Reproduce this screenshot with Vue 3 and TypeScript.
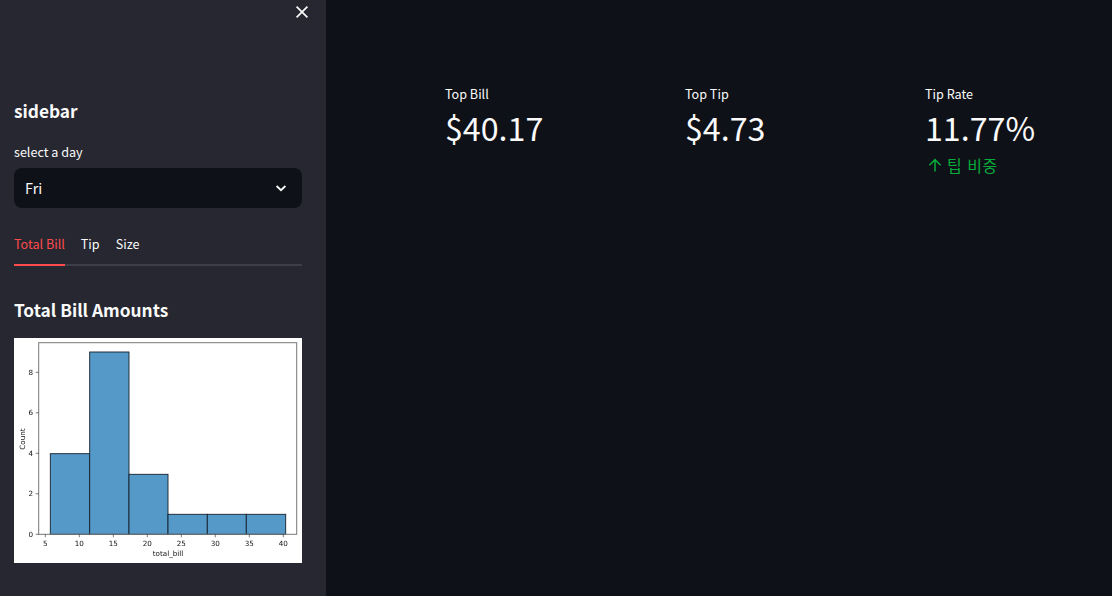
<template>
  <div class="page">
    <aside class="sidebar">
      <div class="sidebar-top">
        <button class="close-btn" aria-label="Close sidebar">
          <svg width="16" height="16" viewBox="0 0 16 16" fill="none">
            <path d="M2.6 2.6 13.4 13.4M13.4 2.6 2.6 13.4" stroke="#fafafa" stroke-width="1.7" />
          </svg>
        </button>
      </div>

      <h2 class="sidebar-title">sidebar</h2>

      <label class="field-label">select a day</label>
      <div class="select-box">
        <span class="select-value">Fri</span>
        <svg width="16" height="16" viewBox="0 0 16 16" fill="none">
          <path d="M3.6 6 8 10.2 12.4 6" stroke="#fafafa" stroke-width="1.8" />
        </svg>
      </div>

      <div class="tabs">
        <div
          v-for="tab in tabs"
          :key="tab"
          class="tab"
          :class="{ active: tab === activeTab }"
        >
          {{ tab }}
        </div>
      </div>

      <h3 class="chart-title">Total Bill Amounts</h3>

      <div class="chart">
        <svg width="288" height="225" viewBox="0 0 288 225">
          <rect
            v-for="bar in bars"
            :key="bar.x"
            :x="bar.x"
            :y="bar.y"
            :width="bar.w"
            :height="baseY - bar.y"
            fill="#5499c7"
            stroke="#14202c"
            stroke-width="0.9"
          />
          <rect x="24.7" y="4.7" width="258" height="191.6" fill="none" stroke="#777" stroke-width="1" />
          <g v-for="t in xTicks" :key="t.label">
            <line :x1="t.x" :x2="t.x" :y1="baseY" :y2="baseY + 3" stroke="#222" stroke-width="0.6" />
            <text :x="t.x" y="207.5" class="tick" text-anchor="middle">{{ t.label }}</text>
          </g>
          <g v-for="t in yTicks" :key="t.label">
            <line x1="21.7" x2="24.7" :y1="t.y" :y2="t.y" stroke="#222" stroke-width="0.6" />
            <text x="19" :y="t.y + 2.6" class="tick" text-anchor="end">{{ t.label }}</text>
          </g>
          <text x="154" y="217.5" class="tick" text-anchor="middle">total_bill</text>
          <text class="tick" text-anchor="middle" transform="translate(11 101) rotate(-90)">Count</text>
        </svg>
      </div>
    </aside>

    <main class="main">
      <div class="metrics">
        <div v-for="m in metrics" :key="m.label" class="metric">
          <div class="metric-label">{{ m.label }}</div>
          <div class="metric-value">{{ m.value }}</div>
          <div v-if="m.delta" class="metric-delta">
            <svg width="16" height="16" viewBox="0 0 16 16" fill="none">
              <path d="M8 14.4V2.6M2.4 8.2 8 2.6l5.6 5.6" stroke="#09ab3b" stroke-width="1.5" />
            </svg>
            <span>{{ m.delta }}</span>
          </div>
        </div>
      </div>
    </main>
  </div>
</template>

<script setup lang="ts">
const tabs = ['Total Bill', 'Tip', 'Size']
const activeTab = 'Total Bill'

const baseY = 196.3

const bars = [
  { x: 36.3, y: 115.7, w: 39.4 },
  { x: 75.7, y: 14, w: 39.3 },
  { x: 115, y: 136.3, w: 39 },
  { x: 154, y: 176.3, w: 39.3 },
  { x: 193.3, y: 176.3, w: 39 },
  { x: 232.3, y: 176.3, w: 39.4 },
]

const xTicks = [5, 10, 15, 20, 25, 30, 35, 40].map((v, i) => ({
  label: String(v),
  x: 31.3 + i * 34,
}))

const yTicks = [0, 2, 4, 6, 8].map((v, i) => ({
  label: String(v),
  y: baseY - i * 40.5,
}))

const metrics = [
  { label: 'Top Bill', value: '$40.17', delta: '' },
  { label: 'Top Tip', value: '$4.73', delta: '' },
  { label: 'Tip Rate', value: '11.77%', delta: '팁 비중' },
]
</script>

<style>
html,
body {
  margin: 0;
  background: #0e1117;
}
</style>

<style scoped>
.page {
  display: flex;
  height: 596px;
  overflow: hidden;
  font-family: "Noto Sans CJK KR", "Noto Sans", sans-serif;
  color: #fafafa;
  background: #0e1117;
}

.sidebar {
  width: 326px;
  flex-shrink: 0;
  box-sizing: border-box;
  padding: 0 24px 0 14px;
  background: #262730;
}

.sidebar-top {
  display: flex;
  justify-content: flex-end;
  height: 97px;
  margin-right: -8px;
  padding-top: 4px;
  box-sizing: border-box;
}

.close-btn {
  width: 16px;
  height: 16px;
  padding: 0;
  border: none;
  background: none;
}

.sidebar-title {
  margin: 0;
  font-size: 17.3px;
  line-height: 28px;
  font-weight: 600;
}

.field-label {
  display: block;
  margin-top: 15px;
  font-size: 12.6px;
  line-height: 24px;
}

.select-box {
  display: flex;
  align-items: center;
  justify-content: space-between;
  height: 40px;
  margin-top: 4px;
  padding: 0 13px 0 11px;
  border-radius: 8px;
  background: #0e1117;
  font-size: 14.4px;
}

.select-value {
  height: 40px;
  line-height: 39px;
}

.tabs {
  display: flex;
  gap: 16px;
  height: 58px;
  box-sizing: border-box;
  padding-top: 18px;
  border-bottom: 2px solid #3d3e47;
  font-size: 12.6px;
}

.tab {
  height: 40px;
  line-height: 36px;
  box-sizing: border-box;
  white-space: nowrap;
}

.tab.active {
  color: #ff4b4b;
  border-bottom: 2px solid #ff4b4b;
}

.chart-title {
  margin: 29px 0 0;
  font-size: 17.3px;
  line-height: 30px;
  font-weight: 600;
}

.chart {
  width: 288px;
  height: 225px;
  margin-top: 13px;
  background: #fff;
}

.chart svg {
  display: block;
  filter: blur(0.3px);
}

.tick {
  font-family: "DejaVu Sans", sans-serif;
  font-size: 7.2px;
  fill: #111;
}

.main {
  flex: 1;
  padding: 84px 0 0 119px;
}

.metrics {
  display: grid;
  grid-template-columns: repeat(3, 240px);
}

.metric-label {
  font-size: 12.6px;
  line-height: 20px;
}

.metric-value {
  margin-top: 0;
  font-size: 32.2px;
  line-height: 46px;
}

.metric-delta {
  display: flex;
  align-items: center;
  gap: 4px;
  margin-top: 4px;
  margin-left: 2px;
  font-size: 16px;
  line-height: 22px;
  letter-spacing: 0.5px;
  word-spacing: 1px;
  color: #09ab3b;
}
</style>
